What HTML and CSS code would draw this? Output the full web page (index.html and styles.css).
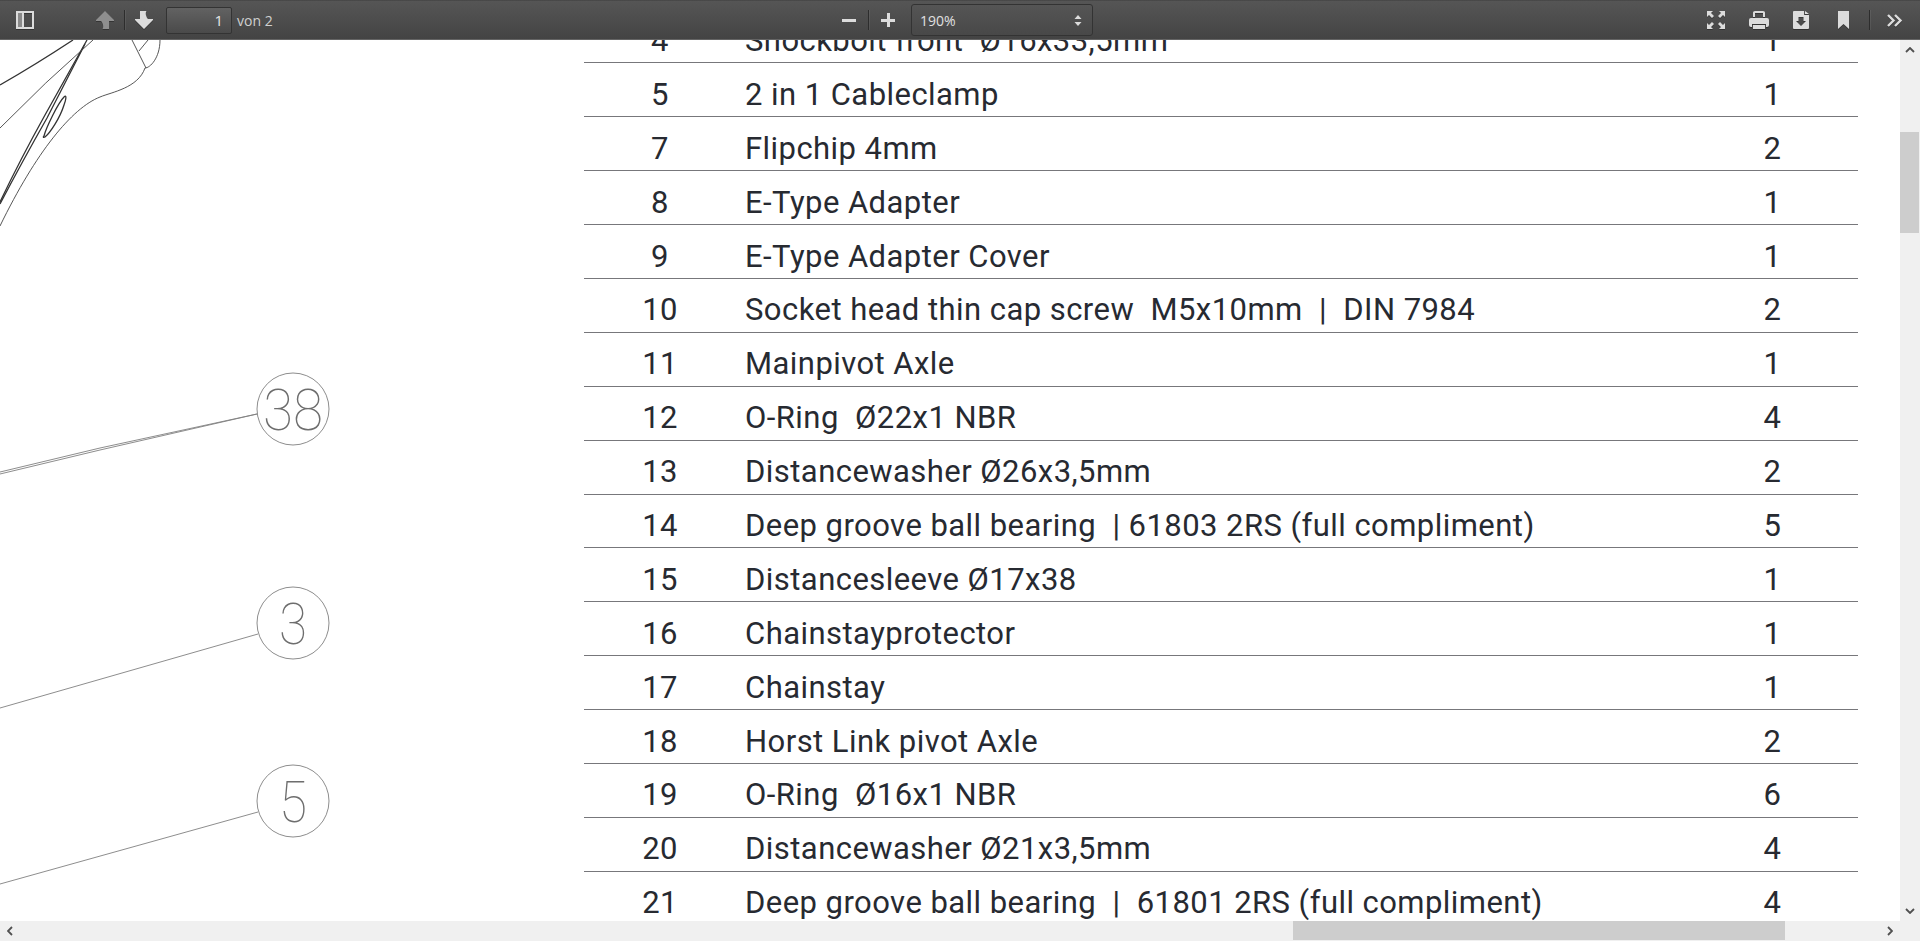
FILE: index.html
```html
<!DOCTYPE html>
<html lang="de">
<head>
<meta charset="utf-8">
<title>PDF</title>
<link rel="stylesheet" href="styles.css">
</head>
<body>
<header class="toolbar">
  <div class="tool-left">
    <svg class="icon sidebar-icon" viewBox="0 0 18 18"><path class="i" fill-rule="evenodd" d="M0 0h18v18H0zM2 2v14h4V2zM8 2v14h8V2z"/><rect class="dim" x="2" y="2" width="4" height="14"/></svg>
    <svg class="icon up-icon" viewBox="0 0 18 18"><path class="off" d="M9 0l9 9v1h-5v8H6.500C8 16 7 12 5 10H0V9z"/></svg>
    <span class="sep"></span>
    <svg class="icon down-icon" viewBox="0 0 18 18"><path class="i" d="M9 18L0 9V8h5V0h6.500C10 2 11 6 13 8h5v1z"/></svg>
    <div class="page-input">1</div>
    <span class="page-count">von 2</span>
  </div>
  <div class="tool-mid">
    <span class="zoom-minus"></span>
    <span class="sep"></span>
    <span class="zoom-plus"></span>
    <div class="zoom-select">
      <span>190%</span>
      <svg class="updown" viewBox="0 0 8 11"><path class="i" d="M4 0l3.500 4h-7zM4 11L.5 7h7z"/></svg>
    </div>
  </div>
  <div class="tool-right">
    <svg class="icon present-icon" viewBox="0 0 18 18"><path class="i" d="M0 0h6L4 2l3 3-2 2-3-3-2 2zM18 0v6l-2-2-3 3-2-2 3-3-2-2zM0 18v-6l2 2 3-3 2 2-3 3 2 2zM18 18h-6l2-2-3-3 2-2 3 3 2-2z"/></svg>
    <svg class="icon print-icon" viewBox="0 0 20 18"><path class="i" fill-rule="evenodd" d="M4 1.500Q4 0 6 0h8q2 0 2 1.500V6H4zM6 2v4h8V2zM2 7h16q2 0 2 2v5q0 2-2 2h-1v-3H3v3H2q-2 0-2-2V9q0-2 2-2zM4 14h12v4H4z"/></svg>
    <svg class="icon download-icon" viewBox="0 0 16 18"><path class="i" fill-rule="evenodd" d="M1 0h10v4h5v13q0 1-1 1H1q-1 0-1-1V1q0-1 1-1zM5.500 6v4H3l5 5 5-5h-2.500V6zM12 0l4 3h-4z"/></svg>
    <svg class="icon bookmark-icon" viewBox="0 0 11 18"><path class="i" d="M0 0h11v18L5.500 13 0 18z"/></svg>
    <span class="sep"></span>
    <svg class="icon tools-icon" viewBox="0 0 17 13"><path class="stroke" d="M2 1l5.500 5.500L2 12M9 1l5.500 5.500L9 12"/></svg>
  </div>
</header>

<div class="viewer">
  <main class="viewport">
    <div class="page">
      <svg class="drawing" viewBox="0 0 584 881">
        <g class="thick">
          <path d="M0 45Q35 25 73 0"/>
          <path d="M0 162Q20 120 45 75L87 0"/>
          <path d="M0 164Q22 122 47 78L85 4"/>
          <path d="M44 96C46 88 58 63 64 57C67 54 66 60 64 65C60 78 50 93 45 97C43 98 43 97 44 96Z"/>
        </g>
        <g class="thin">
          <path d="M0 88Q45 42 93 0"/>
          <path d="M160 0C160 18 150 28 145 28C138 48 112 52 100 57C72 68 36 112 0 186"/>
          <path d="M132 0L146 28M148 0L139 11"/>
        </g>
        <g class="fine">
          <circle cx="293" cy="369" r="36"/>
          <circle cx="293" cy="583" r="36"/>
          <circle cx="293" cy="761" r="36"/>
          <path d="M257 374L100 410L0 434M257 374L100 408L0 432"/>
          <path d="M258 594L0 668"/>
          <path d="M258 772L0 844"/>
        </g>
        <text class="balloon" x="293" y="390" textLength="60" lengthAdjust="spacingAndGlyphs">38</text>
        <text class="balloon" x="293" y="604" textLength="28" lengthAdjust="spacingAndGlyphs">3</text>
        <text class="balloon" x="293" y="782" textLength="28" lengthAdjust="spacingAndGlyphs">5</text>
      </svg>
      <div class="parts">
        <div class="row"><span class="no">4</span><span class="name">Shockbolt front  Ø16x33,5mm</span><span class="qty">1</span></div>
        <div class="row"><span class="no">5</span><span class="name">2 in 1 Cableclamp</span><span class="qty">1</span></div>
        <div class="row"><span class="no">7</span><span class="name">Flipchip 4mm</span><span class="qty">2</span></div>
        <div class="row"><span class="no">8</span><span class="name">E-Type Adapter</span><span class="qty">1</span></div>
        <div class="row"><span class="no">9</span><span class="name">E-Type Adapter Cover</span><span class="qty">1</span></div>
        <div class="row"><span class="no">10</span><span class="name">Socket head thin cap screw  M5x10mm  |  DIN 7984</span><span class="qty">2</span></div>
        <div class="row"><span class="no">11</span><span class="name">Mainpivot Axle</span><span class="qty">1</span></div>
        <div class="row"><span class="no">12</span><span class="name">O-Ring  Ø22x1 NBR</span><span class="qty">4</span></div>
        <div class="row"><span class="no">13</span><span class="name">Distancewasher Ø26x3,5mm</span><span class="qty">2</span></div>
        <div class="row"><span class="no">14</span><span class="name">Deep groove ball bearing  | 61803 2RS (full compliment)</span><span class="qty">5</span></div>
        <div class="row"><span class="no">15</span><span class="name">Distancesleeve Ø17x38</span><span class="qty">1</span></div>
        <div class="row"><span class="no">16</span><span class="name">Chainstayprotector</span><span class="qty">1</span></div>
        <div class="row"><span class="no">17</span><span class="name">Chainstay</span><span class="qty">1</span></div>
        <div class="row"><span class="no">18</span><span class="name">Horst Link pivot Axle</span><span class="qty">2</span></div>
        <div class="row"><span class="no">19</span><span class="name">O-Ring  Ø16x1 NBR</span><span class="qty">6</span></div>
        <div class="row"><span class="no">20</span><span class="name">Distancewasher Ø21x3,5mm</span><span class="qty">4</span></div>
        <div class="row"><span class="no">21</span><span class="name">Deep groove ball bearing  |  61801 2RS (full compliment)</span><span class="qty">4</span></div>
      </div>
    </div>
  </main>
  <div class="vbar">
    <svg class="chev" viewBox="0 0 10 6"><path d="M1 5l4-4 4 4"/></svg>
    <div class="vtrack"><div class="vthumb"></div></div>
    <svg class="chev" viewBox="0 0 10 6"><path d="M1 1l4 4 4-4"/></svg>
  </div>
  <div class="hbar">
    <svg class="chev-h" viewBox="0 0 6 10"><path d="M5 1L1 5l4 4"/></svg>
    <div class="htrack"><div class="hthumb"></div></div>
    <svg class="chev-h" viewBox="0 0 6 10"><path d="M1 1l4 4-4 4"/></svg>
  </div>
  <div class="corner"></div>
</div>
</body>
</html>
```

FILE: styles.css
```css
* { box-sizing: border-box; }
html, body { margin: 0; height: 100%; overflow: hidden; background: #fff; }
body { display: flex; flex-direction: column; height: 941px; font-family: "Open Sans", "Noto Sans", sans-serif; }

.toolbar {
  flex: none;
  height: 40px;
  display: flex;
  align-items: center;
  background: linear-gradient(#565656, #434343);
  box-shadow: inset 0 -1px 0 rgba(255,255,255,.18), inset 0 1px 0 rgba(0,0,0,.15);
  color: #d9d9d9;
  position: relative;
  z-index: 2;
}
.tool-left { display: flex; align-items: center; width: 842px; padding-left: 16px; flex: none; height: 100%; }
.tool-mid { display: flex; align-items: center; flex: none; height: 100%; width: 251px; }
.tool-right { display: flex; align-items: center; flex: 1; justify-content: flex-end; height: 100%; padding-right: 17px; }

.icon { display: block; flex: none; filter: drop-shadow(0 1px 0 rgba(0,0,0,.3)); }
.i { fill: #dcdcdc; }
.off { fill: #8e8e8e; }
.dim { fill: #8a8a8a; }
.stroke { fill: none; stroke: #dcdcdc; stroke-width: 2.400; }
.sidebar-icon { width: 18px; height: 18px; }
.up-icon { width: 18px; height: 18px; margin-left: 62px; }
.down-icon { width: 18px; height: 18px; }
.sep { display: block; flex: none; width: 1px; height: 20px; background: #2d2d2d; box-shadow: 1px 0 0 rgba(255,255,255,.07); }
.tool-left .sep { margin: 0 10px; }
.page-input {
  width: 66px; height: 27px; margin-left: 13px;
  border: 1px solid #333; border-radius: 2px;
  background: linear-gradient(#626262, #4a4a4a);
  text-align: right; padding: 2px 8px 0 0; font-size: 15px; line-height: 21px; color: #e6e6e6;
}
.page-count { margin-left: 5px; font-size: 14px; color: #d0d0d0; }

.zoom-minus, .zoom-plus { display: block; position: relative; width: 14px; height: 14px; flex: none; }
.zoom-minus::before, .zoom-plus::before, .zoom-plus::after { content: ""; position: absolute; background: #dcdcdc; }
.zoom-minus::before, .zoom-plus::before { left: 0; right: 0; top: 5.500px; height: 3px; }
.zoom-plus::after { top: 0; bottom: 0; left: 5.500px; width: 3px; }
.tool-mid .sep { margin: 0 12px; }
.zoom-select {
  flex: none; width: 182px; height: 32px; margin-left: 16px;
  display: flex; align-items: center; justify-content: space-between;
  padding: 0 10px 0 8px;
  border: 1px solid #333; border-radius: 3px;
  background: linear-gradient(#555, #484848);
  font-size: 14px; color: #e0e0e0;
}
.updown { width: 8px; height: 11px; }

.present-icon { width: 18px; height: 18px; }
.print-icon { width: 20px; height: 18px; margin-left: 24px; }
.download-icon { width: 16px; height: 18px; margin-left: 24px; }
.bookmark-icon { width: 11px; height: 18px; margin-left: 29px; }
.tool-right .sep { margin: 0 16px 0 20px; }
.tools-icon { width: 17px; height: 13px; }

.viewer {
  flex: 1; min-height: 0;
  display: grid;
  grid-template-columns: 1fr 20px;
  grid-template-rows: 1fr 20px;
}
.viewport { overflow: hidden; position: relative; background: #fff; }
.page { position: relative; height: 100%; display: flow-root; }
.drawing { position: absolute; left: 0; top: 0; width: 584px; height: 881px; }
.drawing path, .drawing circle { fill: none; }
.thick path { stroke: #333; stroke-width: 1.300; }
.thin path { stroke: #444; stroke-width: .9; }
.fine circle, .fine path { stroke: #808080; stroke-width: .9; }
.balloon {
  font-family: "Roboto", sans-serif; font-weight: 100; font-size: 58px;
  text-anchor: middle; fill: #6e6e6e;
}

.parts { margin-left: 584px; width: 1274px; margin-top: -30.500px; }
.row {
  height: 53.900px;
  display: grid;
  grid-template-columns: 152px 1000px 1fr;
  align-items: center;
  border-bottom: 1px solid #77777b;
  font-family: "Roboto", sans-serif;
  font-size: 31px;
  letter-spacing: .45px;
  padding-top: 9px;
  color: #272a31;
  white-space: pre;
}
.no, .qty { text-align: center; }
.name { padding-left: 9px; }
.qty { padding-right: 49px; }

.vbar { background: #f0f0f0; display: flex; flex-direction: column; align-items: center; }
.vtrack { flex: 1; width: 100%; position: relative; }
.vthumb { position: absolute; top: 72px; left: 0; right: 1px; height: 101px; background: #cdcdcd; }
.chev { flex: none; width: 10px; height: 6px; margin: 7px 0; fill: none; stroke: #505050; stroke-width: 1.800; }
.hbar { background: #f0f0f0; display: flex; align-items: center; }
.htrack { flex: 1; height: 100%; position: relative; }
.hthumb { position: absolute; top: 0; bottom: 1px; left: 1273px; width: 492px; background: #cdcdcd; }
.chev-h { flex: none; width: 6px; height: 10px; margin: 0 7px; fill: none; stroke: #505050; stroke-width: 1.800; }
.corner { background: #f0f0f0; }
```
